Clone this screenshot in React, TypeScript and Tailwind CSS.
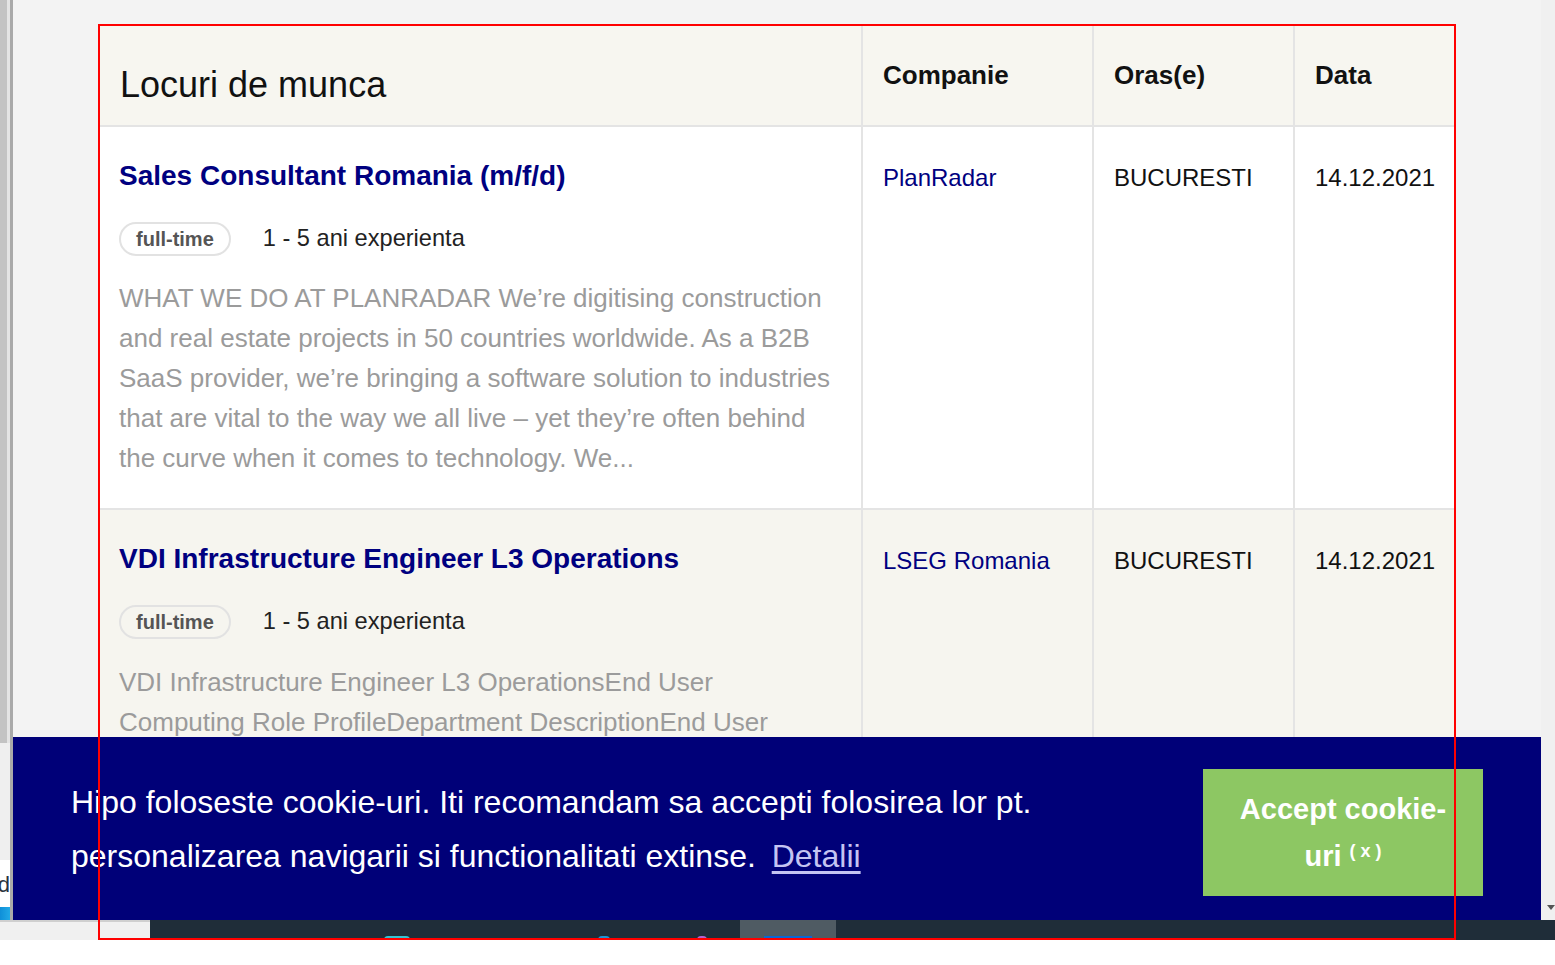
const jobs = [
  {
    title: "Sales Consultant Romania (m/f/d)",
    tag: "full-time",
    experience: "1 - 5 ani experienta",
    description:
      "WHAT WE DO AT PLANRADAR We\u2019re digitising construction and real estate projects in 50 countries worldwide. As a B2B SaaS provider, we\u2019re bringing a software solution to industries that are vital to the way we all live \u2013 yet they\u2019re often behind the curve when it comes to technology. We...",
    company: "PlanRadar",
    city: "BUCURESTI",
    date: "14.12.2021",
    bg: "bg-white",
  },
  {
    title: "VDI Infrastructure Engineer L3 Operations",
    tag: "full-time",
    experience: "1 - 5 ani experienta",
    description:
      "VDI Infrastructure Engineer L3 OperationsEnd User Computing Role ProfileDepartment DescriptionEnd User Computing team is responsible for the VDI platform and the related services across the group...",
    company: "LSEG Romania",
    city: "BUCURESTI",
    date: "14.12.2021",
    bg: "bg-[#f6f5ef]",
  },
]

function LeftEdge() {
  return (
    <div className="flex w-[13px] shrink-0">
      <div className="flex w-[10px] flex-col">
        {/* other window's scrollbar thumb */}
        <div className="flex h-[743px]">
          <div className="w-[7px] bg-[#c3c3c3]" />
          <div className="w-[3px] bg-[#e4e4e4]" />
        </div>
        <div className="h-[117px] bg-[#efefef]" />
        <div className="flex h-[47px] items-center justify-end overflow-hidden bg-white pt-[2px]">
          <span className="text-[22px] leading-none text-[#2a3340]">d</span>
        </div>
        <div className="h-[13px] bg-gradient-to-r from-[#0f8fd8] to-[#21a9e6]" />
      </div>
      <div className="w-[3px] bg-[#a9a9a9]" />
    </div>
  )
}

function JobsTable() {
  const head = "h-[101px] border-b-2 border-[#e4e4e4] bg-[#f7f6f0] pl-[20px]"
  return (
    <div className="grid w-[1354px] grid-cols-[763px_231px_201px_159px]">
      <div className={`${head} border-r-2 pt-[39px] pl-[19px] text-[36px] leading-[40px] text-[#111]`}>
        Locuri de munca
      </div>
      <div className={`${head} border-r-2 pt-[35px] text-[26px] leading-[28px] font-bold text-[#111]`}>
        Companie
      </div>
      <div className={`${head} border-r-2 pt-[35px] text-[26px] leading-[28px] font-bold text-[#111]`}>
        Oras(e)
      </div>
      <div className={`${head} pt-[35px] text-[26px] leading-[28px] font-bold text-[#111]`}>Data</div>

      {jobs.map((job, i) => (
        <div key={i} className="contents">
          <div className={`${job.bg} border-r-2 border-b-2 border-[#e4e4e4] pt-[33px] pr-[23px] pb-[30px] pl-[19px]`}>
            <h3 className="text-[28px] leading-[32px] font-bold text-[#000080]">{job.title}</h3>
            <div className="mt-[29px] flex items-center gap-[32px]">
              <span className="flex h-[34px] items-center rounded-full border-2 border-[#e2e2e2] px-[15px] text-[20px] font-bold text-[#555]">
                {job.tag}
              </span>
              <span className="text-[23.6px] text-[#222]">{job.experience}</span>
            </div>
            <p className="mt-[22px] text-[26px] leading-[40px] text-[#9b9b9b]">{job.description}</p>
          </div>
          <div className={`${job.bg} border-r-2 border-b-2 border-[#e4e4e4] pt-[37px] pl-[20px] text-[24px] leading-[28px] text-[#000080]`}>
            {job.company}
          </div>
          <div className={`${job.bg} border-r-2 border-b-2 border-[#e4e4e4] pt-[37px] pl-[20px] text-[24px] leading-[28px] text-[#111]`}>
            {job.city}
          </div>
          <div className={`${job.bg} border-b-2 border-[#e4e4e4] pt-[37px] pl-[20px] text-[24px] leading-[28px] text-[#111]`}>
            {job.date}
          </div>
        </div>
      ))}
    </div>
  )
}

function Taskbar() {
  return (
    <div className="flex h-[20px]">
      <div className="w-[150px] border-t-2 border-[#cfcfcf] bg-[#f0f0f0]" />
      <div className="flex flex-1 items-end bg-[#1f2d39]">
        <div className="ml-[234px] h-[4px] w-[26px] rounded-t-full bg-[#35c2d4]" />
        <div className="ml-[188px] h-[4px] w-[12px] rounded-t-full bg-[#1f94d6]" />
        <div className="ml-[87px] h-[4px] w-[10px] rounded-t-full bg-[#b264d0]" />
        <div className="ml-[33px] flex h-[20px] w-[96px] items-end justify-center bg-[#4f5b63]">
          <div className="h-[4px] w-[48px] bg-[#0a66d4]" />
        </div>
      </div>
    </div>
  )
}

function CookieBar() {
  return (
    <div className="absolute top-[737px] left-[13px] flex h-[183px] w-[1528px] items-center justify-between bg-[#000078] px-[58px]">
      <p className="text-[32px] leading-[54px] text-white">
        Hipo foloseste cookie-uri. Iti recomandam sa accepti folosirea lor pt.
        <br />
        personalizarea navigarii si functionalitati extinse.{" "}
        <a className="ml-[7px] text-[#c4c4f2] underline underline-offset-[4px]">Detalii</a>
      </p>
      <button className="mt-[8px] flex h-[127px] w-[280px] shrink-0 items-center justify-center bg-[#8dc763] text-center text-[29px] leading-[47px] font-bold text-white">
        <span>
          Accept cookie-
          <br />
          uri <sup className="text-[18px]">( x )</sup>
        </span>
      </button>
    </div>
  )
}

export default function App() {
  return (
    <div className="relative h-[965px] w-[1555px] overflow-hidden bg-white font-['Liberation_Sans',Arial,sans-serif]">
      <div className="flex h-[920px]">
        <LeftEdge />
        <main className="flex-1 overflow-hidden bg-[#f3f3f3] pt-[26px] pl-[87px]">
          <JobsTable />
        </main>
        <div className="flex w-[14px] shrink-0 flex-col items-center justify-end bg-[#f0f0f0] pb-[10px] pl-[6px]">
          <div className="h-0 w-0 border-x-[4px] border-t-[5px] border-x-transparent border-t-[#555]" />
        </div>
      </div>
      <Taskbar />
      <CookieBar />

      {/* red selection frame drawn over the page */}
      <div className="pointer-events-none absolute top-[24px] left-[98px] h-[916px] w-[1358px] border-2 border-[#ff0000]" />
    </div>
  )
}
